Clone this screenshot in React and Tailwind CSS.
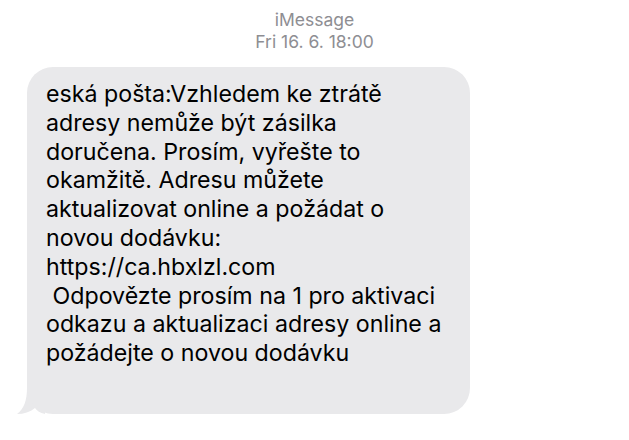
const lines = [
  'eská pošta:Vzhledem ke ztrátě',
  'adresy nemůže být zásilka',
  'doručena. Prosím, vyřešte to',
  'okamžitě. Adresu můžete',
  'aktualizovat online a požádat o',
  'novou dodávku:',
  'https://ca.hbxlzl.com',
  '\u00a0Odpovězte prosím na 1 pro aktivaci',
  'odkazu a aktualizaci adresy online a',
  'požádejte o novou dodávku',
];

export default function App() {
  return (
    <div className="w-[629px] h-[440px] bg-white overflow-hidden font-['Inter','Noto_Sans',sans-serif]">
      <div className="pt-[9px] flex flex-col items-center text-[17.5px] leading-[22px] text-[#8e8e93]">
        <div>iMessage</div>
        <div>Fri 16. 6. 18:00</div>
      </div>
      <div className="relative ml-[27px] mt-[14px] w-[443px]">
        <div className="relative z-10 bg-[#e9e9eb] rounded-[26px] pl-[19px] pr-4 pt-[13px] pb-[46px] text-[23.2px] leading-[28.8px] text-black">
          {lines.map((l, i) => (
            <div key={i} className="whitespace-pre">{l}</div>
          ))}
        </div>
        <svg className="absolute left-[-10px] bottom-0" width="30" height="26" viewBox="0 0 30 26">
          <path d="M10 0 C10 12 7 21 0 26 C7 26 13 24 18 20 C20 23 23 25 28 26 L28 0 Z" fill="#e9e9eb" />
        </svg>
      </div>
    </div>
  );
}
